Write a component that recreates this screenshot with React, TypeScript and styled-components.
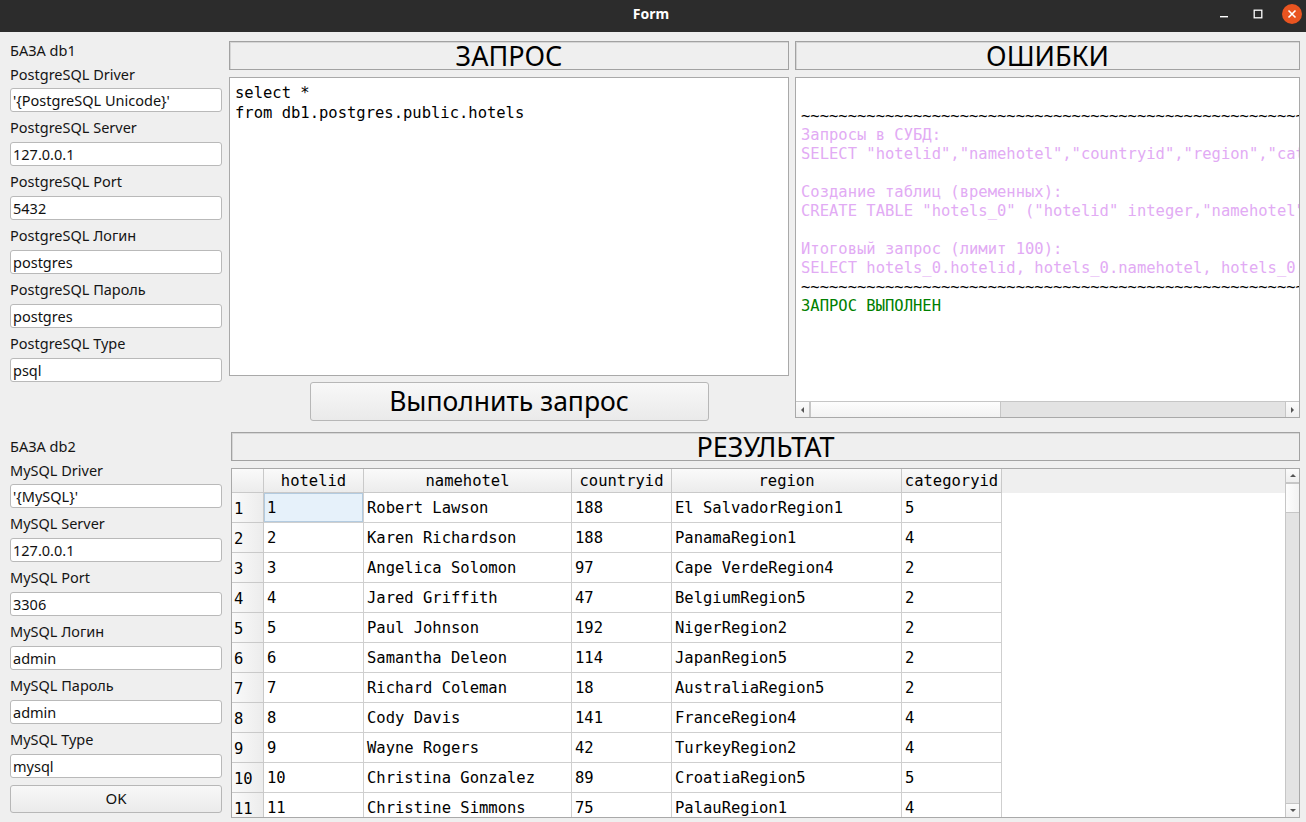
import React from "react";
import styled, { createGlobalStyle } from "styled-components";

const GlobalStyle = createGlobalStyle`
  html, body { margin: 0; padding: 0; background: #efefef; }
  body { font-family: "Noto Sans", "DejaVu Sans", sans-serif; }
  * { box-sizing: border-box; }
`;

const MONO = `"DejaVu Sans Mono", "Liberation Mono", monospace`;
const SANS = `"Noto Sans", "DejaVu Sans", sans-serif`;

const Window = styled.div`
  width: 1306px;
  height: 822px;
  display: flex;
  flex-direction: column;
  overflow: hidden;
  background: #efefef;
`;

const TitleBar = styled.div`
  height: 32px;
  flex: none;
  background: #2c2c2c;
  display: grid;
  grid-template-columns: 1fr auto 1fr;
  align-items: center;
  padding-right: 4px;
`;

const Title = styled.div`
  grid-column: 2;
  color: #ffffff;
  font: bold 14px ${SANS};
  padding-bottom: 5px;
`;

const Controls = styled.div`
  grid-column: 3;
  justify-self: end;
  display: flex;
  align-items: center;
  gap: 14px;
  padding-bottom: 5px;
`;

const Ctl = styled.div<{ $close?: boolean }>`
  width: 20px;
  height: 20px;
  border-radius: 50%;
  display: flex;
  align-items: center;
  justify-content: center;
  background: ${(p) => (p.$close ? "#e95420" : "transparent")};
`;

const Main = styled.div`
  flex: 1;
  display: flex;
  padding: 6px 6px 4px 10px;
  gap: 7px;
  min-height: 0;
`;

const LeftColumn = styled.div`
  width: 212px;
  flex: none;
  display: flex;
  flex-direction: column;
`;

const Section = styled.div<{ $gap?: number }>`
  display: flex;
  flex-direction: column;
  margin-top: ${(p) => p.$gap ?? 0}px;
`;

const SectionTitle = styled.div`
  height: 24px;
  display: flex;
  align-items: center;
  font: 14.5px ${SANS};
  color: #151515;
`;

const FieldLabel = styled.div<{ $first?: boolean }>`
  height: ${(p) => (p.$first ? 26 : 30)}px;
  display: flex;
  align-items: center;
  padding-bottom: ${(p) => (p.$first ? 3 : 1)}px;
  font: 14.5px ${SANS};
  color: #151515;
`;

const TextInput = styled.input`
  height: 24px;
  width: 100%;
  border: 1px solid #b9b9b9;
  border-radius: 3px;
  background: #ffffff;
  padding: 0 2px;
  font: 14.5px ${SANS};
  color: #111;
  outline: none;
`;

const OkButton = styled.button`
  margin-top: 7px;
  height: 28px;
  width: 100%;
  border: 1px solid #b7b7b7;
  border-radius: 3px;
  background: linear-gradient(#f8f8f8, #ebebeb);
  font: 15px ${SANS};
  color: #111;
  padding: 0 0 2px;
`;

const RightArea = styled.div`
  flex: 1;
  display: flex;
  flex-direction: column;
  padding-top: 3px;
  min-width: 0;
`;

const TopRow = styled.div`
  display: flex;
  gap: 6px;
  height: 380px;
`;

const Column = styled.div<{ $width?: number }>`
  display: flex;
  flex-direction: column;
  ${(p) => (p.$width ? `width: ${p.$width}px; flex: none;` : "flex: 1; min-width: 0;")}
`;

const PanelHeader = styled.div<{ $indent?: number }>`
  height: 29px;
  flex: none;
  margin-left: ${(p) => p.$indent ?? 0}px;
  border: 1px solid #a2a2a2;
  box-shadow: inset 1px 1px 0 #d6d6d6;
  background: #efefef;
  display: flex;
  align-items: center;
  justify-content: center;
  font: 27px ${SANS};
  color: #000;
  line-height: 1;
`;

const Editor = styled.div`
  margin-top: 7px;
  height: 299px;
  flex: none;
  background: #fff;
  border: 1px solid #a9a9a9;
  padding: 5px 5px;
  font: 15.5px ${MONO};
  line-height: 20px;
  white-space: pre;
  color: #000;
  overflow: hidden;
`;

const RunButton = styled.button`
  margin-top: 6px;
  align-self: center;
  width: 399px;
  height: 39px;
  border: 1px solid #b7b7b7;
  border-radius: 3px;
  background: linear-gradient(#f8f8f8, #eaeaea);
  font: 26.5px ${SANS};
  color: #000;
  padding: 0 0 2px;
`;

const LogBox = styled.div`
  margin-top: 7px;
  height: 341px;
  flex: none;
  background: #fff;
  border: 1px solid #a9a9a9;
  display: flex;
  flex-direction: column;
`;

const LogText = styled.div`
  flex: 1;
  overflow: hidden;
  padding: 9.5px 5px 0;
  font: 15.5px ${MONO};
  line-height: 19px;
  white-space: pre;
`;

const LogLine = styled.div<{ $tone?: "pink" | "green" | "plain" }>`
  height: 19px;
  color: ${(p) => (p.$tone === "pink" ? "#e2abf4" : p.$tone === "green" ? "#008000" : "#000")};
`;

const HScroll = styled.div`
  height: 16px;
  flex: none;
  display: flex;
  border-top: 1px solid #c6c6c6;
  background: #e3e3e3;
`;

const VScroll = styled.div`
  width: 14px;
  flex: none;
  display: flex;
  flex-direction: column;
  border-left: 1px solid #c6c6c6;
  background: #e3e3e3;
`;

const ArrowBox = styled.div<{ $vertical?: boolean }>`
  ${(p) => (p.$vertical ? "height: 14px; width: 100%;" : "width: 14px; height: 100%;")}
  flex: none;
  display: flex;
  align-items: center;
  justify-content: center;
  background: linear-gradient(#fbfbfb, #efefef);
  border: 0 solid #c6c6c6;
`;

const Handle = styled.div<{ $vertical?: boolean; $size: number }>`
  flex: none;
  ${(p) =>
    p.$vertical
      ? `height: ${p.$size}px; border-top: 1px solid #c6c6c6; border-bottom: 1px solid #c6c6c6;`
      : `width: ${p.$size}px; border-left: 1px solid #c6c6c6; border-right: 1px solid #c6c6c6;`}
  background: linear-gradient(${(p) => (p.$vertical ? "90deg, " : "")}#fdfdfd, #f2f2f2);
`;

const Track = styled.div`
  flex: 1;
`;

const ResultHeader = styled(PanelHeader)`
  margin-top: 11px;
`;

const TableFrame = styled.div`
  margin-top: 7px;
  margin-left: 2px;
  height: 350px;
  flex: none;
  border: 1px solid #a9a9a9;
  background: #fff;
  display: flex;
  overflow: hidden;
`;

const Grid = styled.div`
  flex: 1;
  display: grid;
  grid-template-columns: 32px 100px 208px 100px 230px 100px 1fr;
  grid-auto-rows: 30px;
  grid-template-rows: 24px;
  overflow: hidden;
  font: 15.5px ${MONO};
  color: #000;
`;

const HeadCell = styled.div`
  border-right: 1px solid #c9c9c9;
  border-bottom: 1px solid #c9c9c9;
  background: linear-gradient(#fafafa, #ececec);
  display: flex;
  align-items: center;
  justify-content: center;
  white-space: nowrap;
  overflow: hidden;
  padding-top: 1px;
`;

const HeadFill = styled.div`
  background: #efefef;
`;

const RowHead = styled.div`
  border-right: 1px solid #c9c9c9;
  border-bottom: 1px solid #c9c9c9;
  background: linear-gradient(90deg, #fafafa, #ececec);
  display: flex;
  align-items: center;
  padding: 3px 0 0 2px;
`;

const Cell = styled.div<{ $selected?: boolean }>`
  border-right: 1px solid #cfcfcf;
  border-bottom: 1px solid #cfcfcf;
  display: flex;
  align-items: center;
  padding: 0 3px;
  white-space: nowrap;
  overflow: hidden;
  background: ${(p) => (p.$selected ? "#e6f1fa" : "#fff")};
  box-shadow: ${(p) => (p.$selected ? "inset 0 0 0 1px #b3cbe0" : "none")};
`;

const Fill = styled.div`
  background: #fff;
`;

const Tri = ({ dir }: { dir: "up" | "down" | "left" | "right" }) => {
  const pts: Record<string, string> = {
    up: "1,5 4,2 7,5",
    down: "1,2 4,5 7,2",
    left: "5,1 2,4 5,7",
    right: "2,1 5,4 2,7",
  };
  return (
    <svg width="8" height="8" viewBox="0 0 8 8">
      <polygon points={pts[dir]} fill="#555" />
    </svg>
  );
};

const db1 = [
  ["PostgreSQL Driver", "'{PostgreSQL Unicode}'"],
  ["PostgreSQL Server", "127.0.0.1"],
  ["PostgreSQL Port", "5432"],
  ["PostgreSQL Логин", "postgres"],
  ["PostgreSQL Пароль", "postgres"],
  ["PostgreSQL Type", "psql"],
];

const db2 = [
  ["MySQL Driver", "'{MySQL}'"],
  ["MySQL Server", "127.0.0.1"],
  ["MySQL Port", "3306"],
  ["MySQL Логин", "admin"],
  ["MySQL Пароль", "admin"],
  ["MySQL Type", "mysql"],
];

const columns = ["hotelid", "namehotel", "countryid", "region", "categoryid"];

const rows: string[][] = [
  ["1", "Robert Lawson", "188", "El SalvadorRegion1", "5"],
  ["2", "Karen Richardson", "188", "PanamaRegion1", "4"],
  ["3", "Angelica Solomon", "97", "Cape VerdeRegion4", "2"],
  ["4", "Jared Griffith", "47", "BelgiumRegion5", "2"],
  ["5", "Paul Johnson", "192", "NigerRegion2", "2"],
  ["6", "Samantha Deleon", "114", "JapanRegion5", "2"],
  ["7", "Richard Coleman", "18", "AustraliaRegion5", "2"],
  ["8", "Cody Davis", "141", "FranceRegion4", "4"],
  ["9", "Wayne Rogers", "42", "TurkeyRegion2", "4"],
  ["10", "Christina Gonzalez", "89", "CroatiaRegion5", "5"],
  ["11", "Christine Simmons", "75", "PalauRegion1", "4"],
];

const tildes = "~".repeat(90);

const logLines: { text: string; tone: "pink" | "green" | "plain" }[] = [
  { text: " ", tone: "plain" },
  { text: tildes, tone: "plain" },
  { text: "Запросы в СУБД:", tone: "pink" },
  {
    text: 'SELECT "hotelid","namehotel","countryid","region","categoryid" FROM "public"."hotels"',
    tone: "pink",
  },
  { text: " ", tone: "plain" },
  { text: "Создание таблиц (временных):", tone: "pink" },
  {
    text: 'CREATE TABLE "hotels_0" ("hotelid" integer,"namehotel" text,"countryid" integer,"region" text,"categoryid" integer)',
    tone: "pink",
  },
  { text: " ", tone: "plain" },
  { text: "Итоговый запрос (лимит 100):", tone: "pink" },
  {
    text: "SELECT hotels_0.hotelid, hotels_0.namehotel, hotels_0.countryid, hotels_0.region, hotels_0.categoryid FROM hotels_0 LIMIT 100",
    tone: "pink",
  },
  { text: tildes, tone: "plain" },
  { text: "ЗАПРОС ВЫПОЛНЕН", tone: "green" },
];

const DbSection = ({ title, fields, gap }: { title: string; fields: string[][]; gap?: number }) => (
  <Section $gap={gap}>
    <SectionTitle>{title}</SectionTitle>
    {fields.map(([label, value], i) => (
      <React.Fragment key={label}>
        <FieldLabel $first={i === 0}>{label}</FieldLabel>
        <TextInput readOnly defaultValue={value} />
      </React.Fragment>
    ))}
  </Section>
);

export default function App() {
  return (
    <>
      <GlobalStyle />
      <Window>
        <TitleBar>
          <Title>Form</Title>
          <Controls>
            <Ctl>
              <svg width="10" height="10" viewBox="0 0 10 10">
                <rect x="1" y="7" width="8" height="1.4" fill="#fff" />
              </svg>
            </Ctl>
            <Ctl>
              <svg width="10" height="10" viewBox="0 0 10 10">
                <rect x="1.2" y="1.2" width="7.6" height="7.6" fill="none" stroke="#fff" strokeWidth="1.3" />
              </svg>
            </Ctl>
            <Ctl $close>
              <svg width="10" height="10" viewBox="0 0 10 10">
                <path d="M1.5 1.5 L8.5 8.5 M8.5 1.5 L1.5 8.5" stroke="#fff" strokeWidth="1.6" />
              </svg>
            </Ctl>
          </Controls>
        </TitleBar>
        <Main>
          <LeftColumn>
            <DbSection title="БАЗА db1" fields={db1} />
            <DbSection title="БАЗА db2" fields={db2} gap={52} />
            <OkButton>OK</OkButton>
          </LeftColumn>
          <RightArea>
            <TopRow>
              <Column $width={560}>
                <PanelHeader>ЗАПРОС</PanelHeader>
                <Editor>{"select *\nfrom db1.postgres.public.hotels"}</Editor>
                <RunButton>Выполнить запрос</RunButton>
              </Column>
              <Column>
                <PanelHeader>ОШИБКИ</PanelHeader>
                <LogBox>
                  <LogText>
                    {logLines.map((l, i) => (
                      <LogLine key={i} $tone={l.tone}>
                        {l.text}
                      </LogLine>
                    ))}
                  </LogText>
                  <HScroll>
                    <ArrowBox style={{ borderRightWidth: 1 }}>
                      <Tri dir="left" />
                    </ArrowBox>
                    <Handle $size={191} />
                    <Track />
                    <ArrowBox style={{ borderLeftWidth: 1 }}>
                      <Tri dir="right" />
                    </ArrowBox>
                  </HScroll>
                </LogBox>
              </Column>
            </TopRow>
            <ResultHeader $indent={2}>РЕЗУЛЬТАТ</ResultHeader>
            <TableFrame>
              <Grid>
                <HeadCell />
                {columns.map((c) => (
                  <HeadCell key={c}>{c}</HeadCell>
                ))}
                <HeadFill />
                {rows.map((r, i) => (
                  <React.Fragment key={i}>
                    <RowHead>{i + 1}</RowHead>
                    {r.map((v, j) => (
                      <Cell key={j} $selected={i === 0 && j === 0}>
                        {v}
                      </Cell>
                    ))}
                    <Fill />
                  </React.Fragment>
                ))}
              </Grid>
              <VScroll>
                <ArrowBox $vertical style={{ borderBottomWidth: 1 }}>
                  <Tri dir="up" />
                </ArrowBox>
                <Handle $vertical $size={30} />
                <Track />
                <ArrowBox $vertical style={{ borderTopWidth: 1 }}>
                  <Tri dir="down" />
                </ArrowBox>
              </VScroll>
            </TableFrame>
          </RightArea>
        </Main>
      </Window>
    </>
  );
}
